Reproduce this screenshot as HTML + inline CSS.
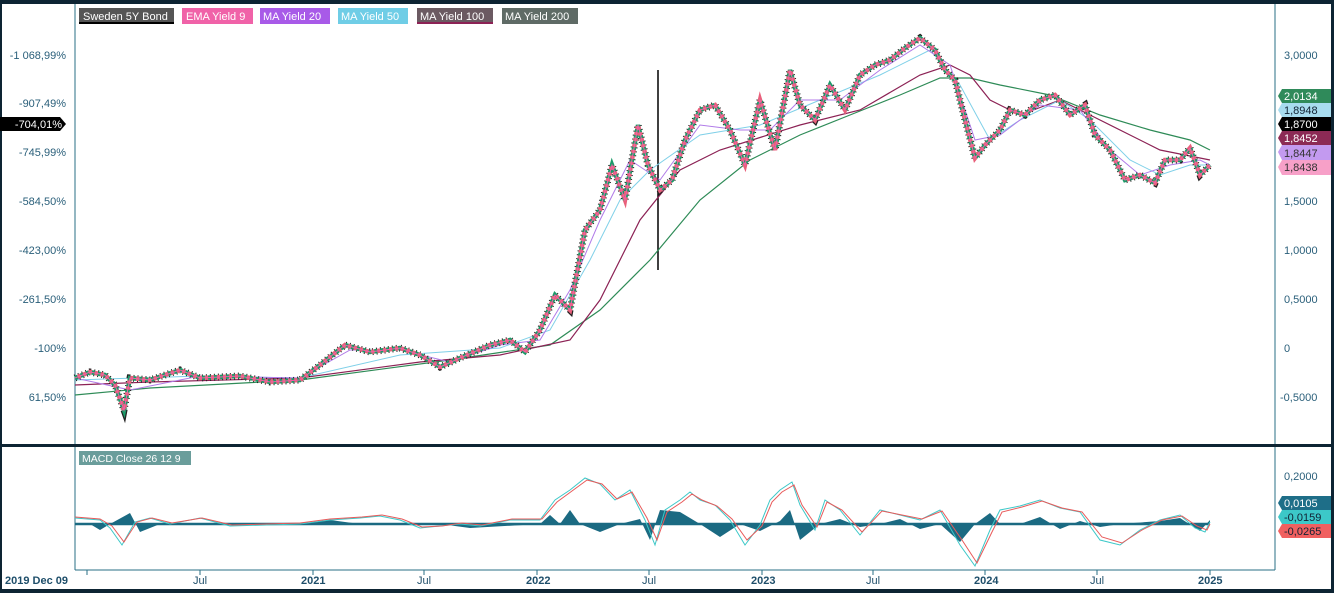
<!DOCTYPE html><html><head><style>
body{margin:0;width:1334px;height:593px;overflow:hidden;background:#fff;font-family:"Liberation Sans",sans-serif}
</style></head><body>
<svg width="1334" height="593" xmlns="http://www.w3.org/2000/svg" font-family="Liberation Sans, sans-serif">
<defs>
<polyline id="px" fill="none" points="75,378 90,372 105,375 115,385 124,410 130,378 150,380 180,370 200,378 240,376 270,382 300,380 320,365 345,345 370,352 400,348 420,355 440,367 460,358 490,345 510,340 525,352 540,330 555,295 570,310 585,230 600,210 612,165 625,200 638,125 648,165 660,190 672,180 685,140 700,110 715,105 730,130 745,165 760,100 775,150 790,70 800,105 815,120 830,85 845,110 860,75 875,65 890,60 905,48 920,38 935,50 945,70 955,80 965,120 975,158 985,145 1000,130 1010,110 1025,115 1040,100 1055,95 1070,115 1085,105 1095,135 1110,150 1125,180 1140,175 1155,183 1165,160 1180,160 1190,148 1200,175 1210,165"/>
</defs>
<rect x="0" y="0" width="1334" height="593" fill="#fff"/>
<rect x="0" y="0" width="1334" height="4" fill="#0d2433"/>
<rect x="0" y="589" width="1334" height="4" fill="#0d2433"/>
<rect x="0" y="0" width="2" height="593" fill="#0d2433"/>
<rect x="1331" y="0" width="3" height="593" fill="#0d2433"/>
<rect x="0" y="444" width="1334" height="3" fill="#0d2433"/>
<line x1="75" y1="4" x2="75" y2="444" stroke="#2a6f86"/>
<line x1="1275" y1="4" x2="1275" y2="444" stroke="#2a6f86"/>
<line x1="75" y1="447" x2="75" y2="570" stroke="#2a6f86"/>
<line x1="1275" y1="447" x2="1275" y2="570" stroke="#2a6f86"/>
<line x1="75" y1="570" x2="1275" y2="570" stroke="#2a6f86"/>
<g font-size="11">
<rect x="79" y="8" width="95" height="16" fill="#555"/><rect x="79" y="22" width="95" height="2" fill="#000"/><text x="83" y="20" fill="#fff">Sweden 5Y Bond</text>
<rect x="182" y="8" width="71" height="16" fill="#f062a8"/><text x="186" y="20" fill="#fff">EMA Yield 9</text>
<rect x="260" y="8" width="70" height="16" fill="#a85ae8"/><text x="263" y="20" fill="#fff">MA Yield 20</text>
<rect x="338" y="8" width="70" height="16" fill="#6fcde6"/><text x="341" y="20" fill="#fff">MA Yield 50</text>
<rect x="417" y="8" width="76" height="16" fill="#6b5a62"/><rect x="417" y="22" width="76" height="2" fill="#8c2255"/><text x="420" y="20" fill="#fff">MA Yield 100</text>
<rect x="502" y="8" width="76" height="16" fill="#5f6b66"/><text x="505" y="20" fill="#fff">MA Yield 200</text>
<rect x="79" y="451" width="112" height="14" fill="#6a9d9b"/><text x="82" y="462" fill="#fff" font-size="10.5">MACD Close 26 12 9</text>
</g>
<g font-size="11" fill="#2a5f7a" text-anchor="end">
<text x="66" y="59">-1 068,99%</text><text x="66" y="107">-907,49%</text><text x="66" y="156">-745,99%</text>
<text x="66" y="205">-584,50%</text><text x="66" y="254">-423,00%</text><text x="66" y="303">-261,50%</text>
<text x="66" y="352">-100%</text><text x="66" y="401">61,50%</text>
</g>
<polygon points="0,117 60,117 66,124 60,131 0,131" fill="#000"/><text x="62" y="128" font-size="11" fill="#fff" text-anchor="end">-704,01%</text>
<g font-size="11" fill="#2a5f7a">
<text x="1284" y="59">3,0000</text><text x="1284" y="205">1,5000</text><text x="1284" y="254">1,0000</text>
<text x="1284" y="303">0,5000</text><text x="1284" y="352">0</text><text x="1280" y="401">-0,5000</text>
<text x="1284" y="480">0,2000</text>
</g>
<g font-size="11">
<polygon points="1282,89 1331,89 1331,103 1282,103 1278,96" fill="#2f8a5a"/><text x="1284" y="100" fill="#fff">2,0134</text>
<polygon points="1282,103 1331,103 1331,117 1282,117 1278,110" fill="#a8dcef"/><text x="1284" y="114" fill="#123">1,8948</text>
<polygon points="1282,117 1331,117 1331,131 1282,131 1278,124" fill="#000"/><text x="1284" y="128" fill="#fff">1,8700</text>
<polygon points="1282,131 1331,131 1331,145 1282,145 1278,138" fill="#8c2a55"/><text x="1284" y="142" fill="#fff">1,8452</text>
<polygon points="1282,145 1331,145 1331,160 1282,160 1278,152" fill="#c39af0"/><text x="1284" y="157" fill="#333">1,8447</text>
<polygon points="1282,160 1331,160 1331,175 1282,175 1278,167" fill="#f7a0c8"/><text x="1284" y="171" fill="#333">1,8438</text>
<polygon points="1282,496 1331,496 1331,510 1282,510 1278,503" fill="#1e6e88"/><text x="1284" y="507" fill="#fff">0,0105</text>
<polygon points="1282,510 1331,510 1331,524 1282,524 1278,517" fill="#3cc8c8"/><text x="1284" y="521" fill="#123">-0,0159</text>
<polygon points="1282,524 1331,524 1331,538 1282,538 1278,531" fill="#f06060"/><text x="1284" y="535" fill="#123">-0,0265</text>
</g>
<g font-size="11" fill="#1e4e6a">
<text x="5" y="584" font-weight="bold">2019 Dec 09</text>
<text x="193" y="584">Jul</text><text x="301" y="584" font-weight="bold">2021</text><text x="417" y="584">Jul</text>
<text x="526" y="584" font-weight="bold">2022</text><text x="642" y="584">Jul</text><text x="751" y="584" font-weight="bold">2023</text>
<text x="866" y="584">Jul</text><text x="974" y="584" font-weight="bold">2024</text><text x="1090" y="584">Jul</text>
<text x="1198" y="584" font-weight="bold">2025</text>
</g>
<g stroke="#2a6f86"><line x1="87" y1="570" x2="87" y2="575"/><line x1="200" y1="570" x2="200" y2="575"/><line x1="313" y1="570" x2="313" y2="575"/><line x1="424" y1="570" x2="424" y2="575"/><line x1="537" y1="570" x2="537" y2="575"/><line x1="649" y1="570" x2="649" y2="575"/><line x1="762" y1="570" x2="762" y2="575"/><line x1="873" y1="570" x2="873" y2="575"/><line x1="985" y1="570" x2="985" y2="575"/><line x1="1097" y1="570" x2="1097" y2="575"/><line x1="1210" y1="570" x2="1210" y2="575"/></g>
<line x1="658" y1="70" x2="658" y2="270" stroke="#000" stroke-width="1.5"/>
<polyline fill="none" stroke="#2e8b57" stroke-width="1.2" points="75,395 150,388 300,380 450,360 550,345 600,310 650,260 700,200 750,160 800,135 850,115 900,95 940,78 970,78 1000,85 1050,95 1100,115 1150,130 1190,140 1210,150"/>
<polyline fill="none" stroke="#8c2255" stroke-width="1.2" points="75,385 150,382 300,378 420,362 500,355 570,340 600,300 640,220 680,170 720,150 800,125 860,110 920,75 950,65 970,75 990,100 1020,115 1060,100 1090,115 1130,135 1160,150 1210,160"/>
<polyline fill="none" stroke="#7fd0e8" stroke-width="1" points="75,380 200,376 300,378 400,355 500,348 550,330 590,260 620,200 650,170 700,135 760,125 820,100 880,75 930,50 960,85 990,140 1020,120 1060,100 1090,120 1130,160 1160,175 1190,165 1210,165"/>
<polyline fill="none" stroke="#b07ae8" stroke-width="1" points="75,378 130,390 200,376 300,378 350,350 400,350 450,362 500,345 540,340 570,290 600,220 630,160 660,180 700,125 740,130 770,130 800,100 840,100 880,70 920,45 950,65 975,140 1000,135 1040,105 1080,110 1110,150 1140,175 1170,165 1200,160 1210,165"/>
<use href="#px" stroke="#222" stroke-width="7" stroke-dasharray="1,3"/>
<use href="#px" stroke="#1a9a68" stroke-width="4.5" stroke-dasharray="3,3"/>
<use href="#px" stroke="#e8607a" stroke-width="4.5" stroke-dasharray="3,3" stroke-dashoffset="3"/>
<use href="#px" stroke="#f062a8" stroke-width="1"/>
<polygon fill="#1b6a82" points="75,524 90,524 100,530 110,524 130,513 140,532 160,524 300,524 330,520 360,524 440,524 470,528 540,524 550,515 560,524 570,510 580,524 600,532 620,524 640,519 650,540 660,510 680,512 700,524 720,537 740,524 760,531 780,521 790,510 800,540 820,524 840,519 860,527 880,524 900,519 920,529 940,524 960,542 975,524 990,513 1000,524 1020,524 1040,517 1060,529 1080,521 1100,527 1120,524 1160,521 1180,518 1200,531 1210,520 1210,524"/>
<line x1="75" y1="524" x2="1210" y2="524" stroke="#1b6a82" stroke-width="2.5"/>
<polyline fill="none" stroke="#3cc8c8" stroke-width="1" points="75,518 100,520 110,528 122,545 135,522 150,518 170,524 200,518 230,526 300,524 330,520 360,518 380,516 400,520 420,528 440,526 460,524 480,526 510,520 540,520 555,500 570,490 585,478 600,484 615,500 630,490 645,520 655,545 665,510 680,500 690,492 700,500 715,505 730,520 745,545 760,525 770,500 780,490 792,482 800,505 815,530 825,500 840,510 860,535 880,510 900,515 920,520 940,510 960,545 975,566 990,530 1000,510 1020,506 1040,500 1060,508 1080,512 1100,540 1120,545 1140,530 1160,520 1180,515 1195,528 1205,532 1210,522"/>
<polyline fill="none" stroke="#e85a5a" stroke-width="1" points="75,517 100,519 112,526 124,542 137,522 152,518 172,523 202,518 232,525 300,523 330,519 362,517 382,515 402,519 422,527 442,526 462,523 482,525 512,519 542,519 557,502 572,491 587,480 602,484 617,499 632,492 647,518 657,540 667,512 682,502 692,494 702,500 717,506 732,519 747,540 762,526 772,502 782,492 794,485 802,505 817,527 827,502 842,510 862,532 882,511 902,515 922,519 942,511 962,540 977,563 992,532 1002,512 1022,507 1042,501 1062,508 1082,512 1102,537 1122,543 1142,530 1162,520 1182,516 1197,526 1207,530 1210,524"/>
</svg>
</body></html>
